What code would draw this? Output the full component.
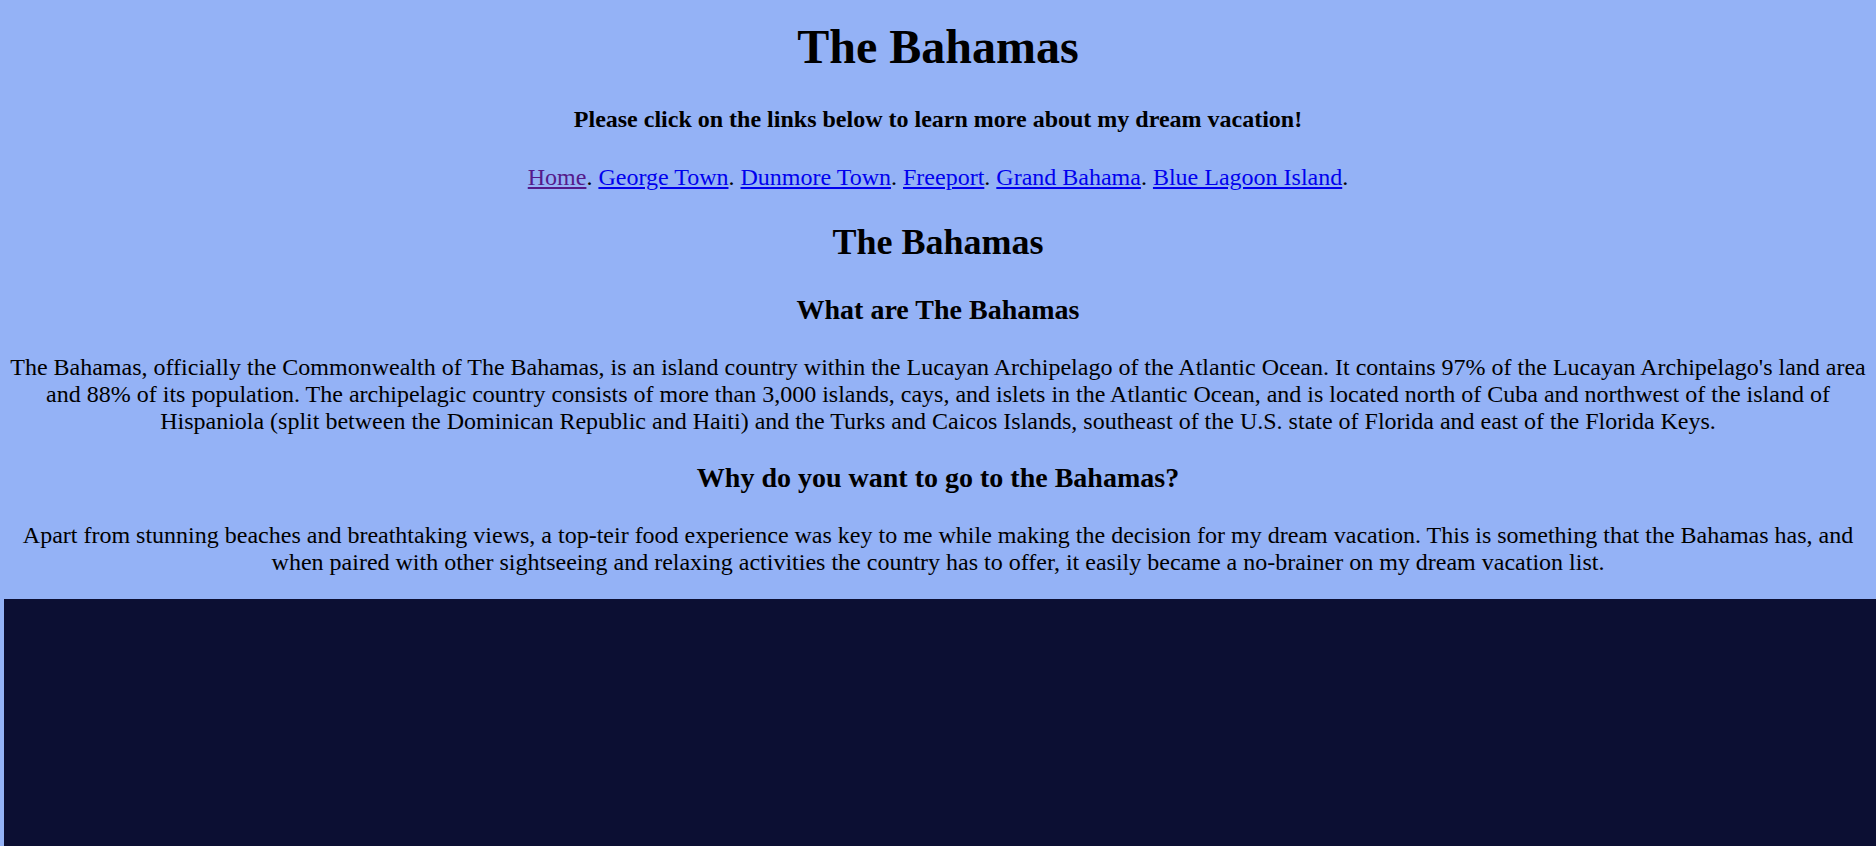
const serif = "font-['Liberation_Serif','Times_New_Roman',serif]";

const links = [
  { label: "Home", visited: true },
  { label: "George Town" },
  { label: "Dunmore Town" },
  { label: "Freeport" },
  { label: "Grand Bahama" },
  { label: "Blue Lagoon Island" },
];

export default function App() {
  return (
    <div className={`h-screen overflow-hidden bg-[#94b2f6] text-black ${serif}`}>
      <div className="px-[12px] text-center">
        <h1 className="mt-[19px] text-[48px] font-bold leading-[normal]">The Bahamas</h1>

        <h4 className="mt-[32px] text-[24px] font-bold leading-[normal]">
          Please click on the links below to learn more about my dream vacation!
        </h4>

        <p className="mt-[31px] text-[24px] leading-[normal]">
          {links.map((l) => (
            <span key={l.label}>
              <a
                href="#"
                className={`underline ${l.visited ? "text-[#551a8b]" : "text-[#0000ee]"}`}
              >
                {l.label}
              </a>
              .{" "}
            </span>
          ))}
        </p>

        <h2 className="mt-[29.5px] text-[36px] font-bold leading-[normal]">The Bahamas</h2>

        <h3 className="mt-[31px] text-[28px] font-bold leading-[normal]">What are The Bahamas</h3>

        <p className="mx-[-4px] mt-[28px] text-[24px] leading-[normal]">
          The Bahamas, officially the Commonwealth of The Bahamas, is an island country within the
          Lucayan Archipelago of the Atlantic Ocean. It contains 97% of the Lucayan Archipelago's
          land area and 88% of its population. The archipelagic country consists of more than 3,000
          islands, cays, and islets in the Atlantic Ocean, and is located north of Cuba and
          northwest of the island of Hispaniola (split between the Dominican Republic and Haiti) and
          the Turks and Caicos Islands, southeast of the U.S. state of Florida and east of the
          Florida Keys.
        </p>

        <h3 className="mt-[27.5px] text-[28px] font-bold leading-[normal]">
          Why do you want to go to the Bahamas?
        </h3>

        <p className="mt-[27.5px] text-[24px] leading-[normal]">
          Apart from stunning beaches and breathtaking views, a top-teir food experience was key to
          me while making the decision for my dream vacation. This is something that the Bahamas
          has, and when paired with other sightseeing and relaxing activities the country has to
          offer, it easily became a no-brainer on my dream vacation list.
        </p>
      </div>

      {/* dark panel runs off the bottom/right edge */}
      <div className="mt-[23px] ml-[4px] h-[400px] w-full bg-[#0c0f33]" />
    </div>
  );
}
